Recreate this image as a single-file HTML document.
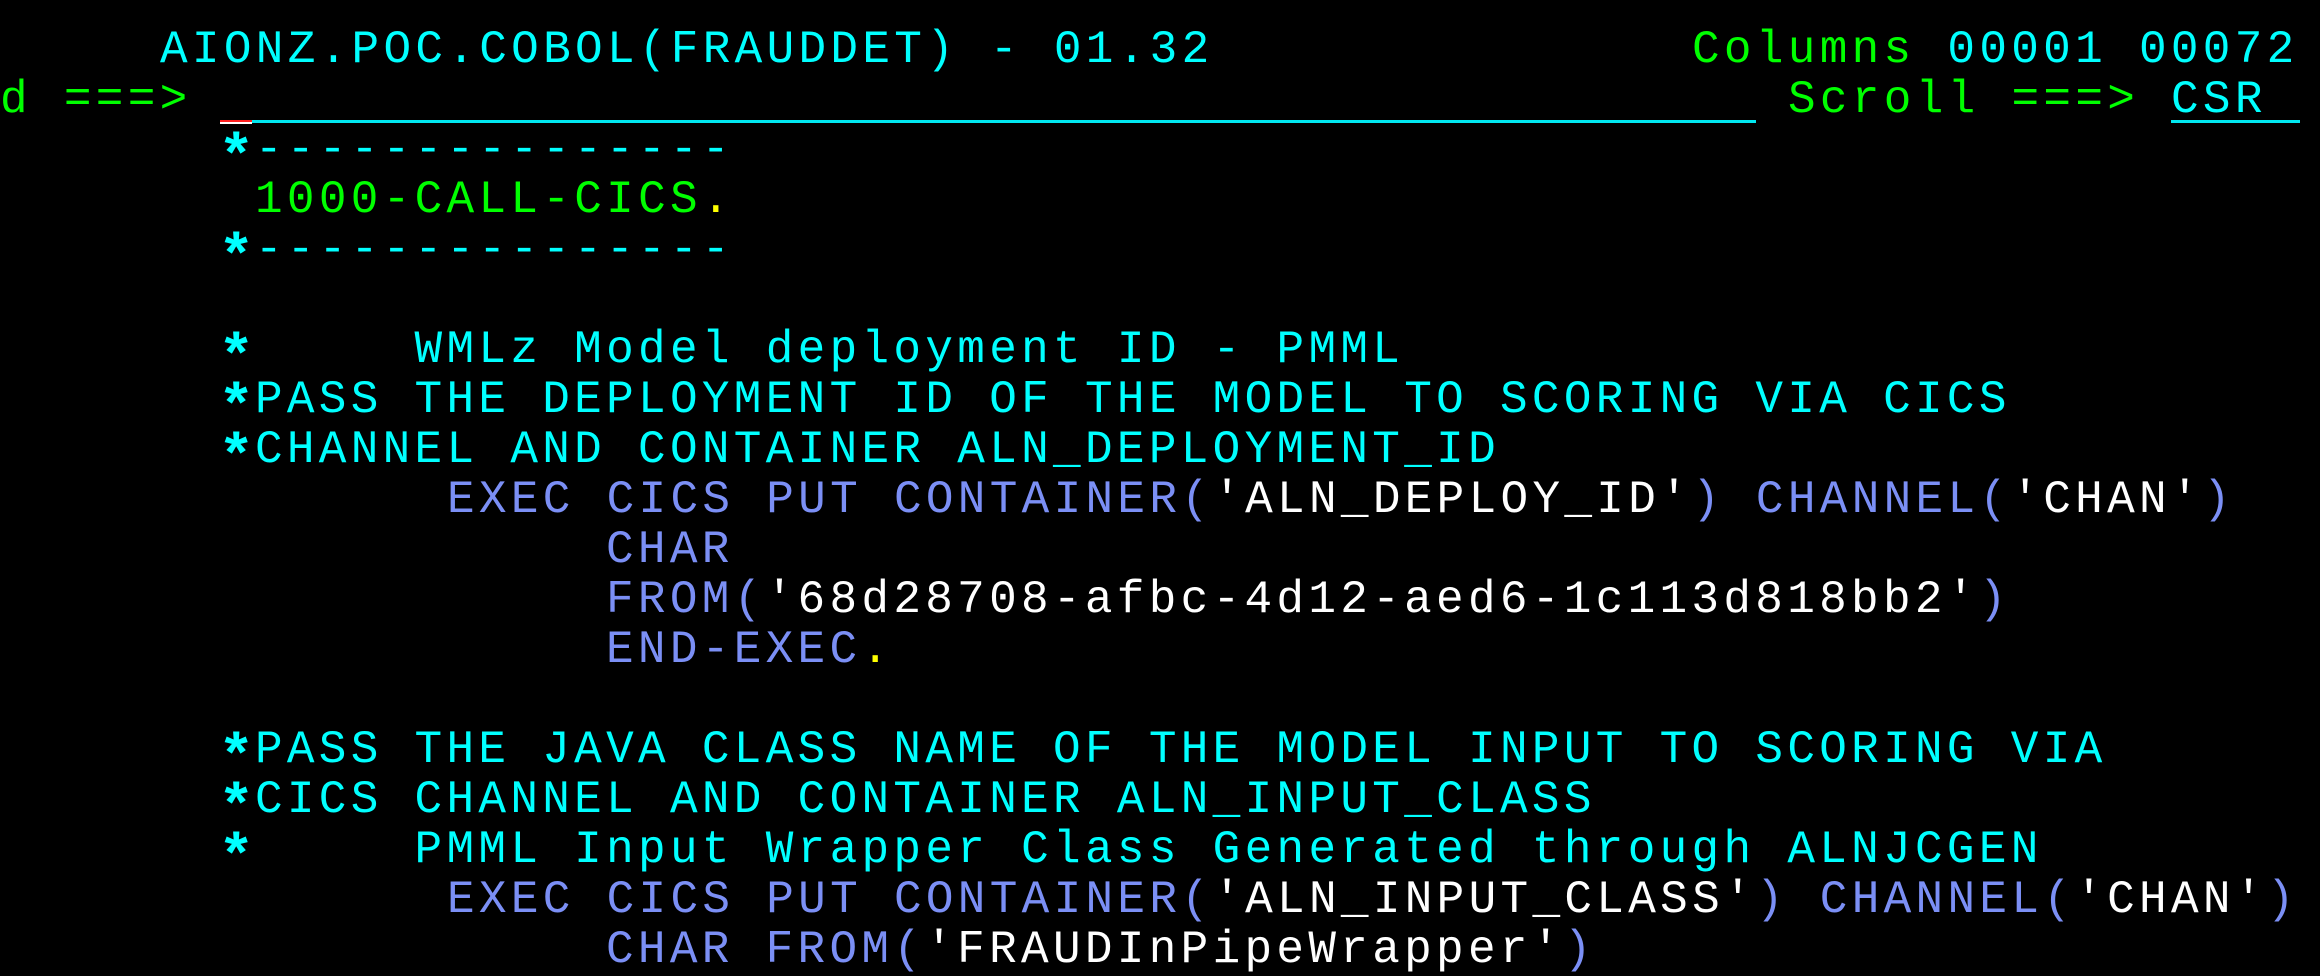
<!DOCTYPE html>
<html><head><meta charset="utf-8"><style>
html,body{margin:0;padding:0;background:#000;width:2320px;height:976px;overflow:hidden}
.r{position:absolute;height:50px;line-height:50px;white-space:pre;font-family:"Liberation Mono",monospace;font-size:46px;letter-spacing:4.32px;margin-top:3px}
.c{color:#00ffff}.g{color:#00ff00}.b{color:#7b8ff5}.w{color:#ffffff}.y{color:#ffff00}
.s{display:inline-block;transform:translateY(9px) scale(1.3);font-weight:bold}
.ul{position:absolute;height:3px;background:#00e8f0}
</style></head><body>
<div class="r c" style="top:22px;left:160px">AIONZ.POC.COBOL(FRAUDDET) - 01.32</div>
<div class="r" style="top:22px;left:1692px"><span class="g">Columns</span><span class="c"> 00001 00072</span></div>
<div class="r g" style="top:72px;left:0px">d ===&gt;</div>
<div class="r g" style="top:72px;left:1788px">Scroll ===&gt;</div>
<div class="r c" style="top:72px;left:2171px">CSR</div>
<div class="ul" style="top:120px;left:252px;width:1504px"></div>
<div style="position:absolute;top:120px;left:220px;width:32px;height:2px;background:#ff2020"></div>
<div style="position:absolute;top:122px;left:220px;width:32px;height:2px;background:#fff"></div>
<div class="ul" style="top:120px;left:2171px;width:129px"></div>
<div class="r c" style="top:122px;left:223px"><span class="s">*</span>---------------</div>
<div class="r" style="top:172px;left:255px"><span class="g">1000-CALL-CICS</span><span class="y">.</span></div>
<div class="r c" style="top:222px;left:223px"><span class="s">*</span>---------------</div>
<div class="r c" style="top:322px;left:223px"><span class="s">*</span>     WMLz Model deployment ID - PMML</div>
<div class="r c" style="top:372px;left:223px"><span class="s">*</span>PASS THE DEPLOYMENT ID OF THE MODEL TO SCORING VIA CICS</div>
<div class="r c" style="top:422px;left:223px"><span class="s">*</span>CHANNEL AND CONTAINER ALN_DEPLOYMENT_ID</div>
<div class="r" style="top:472px;left:447px"><span class="b">EXEC CICS PUT CONTAINER(</span><span class="w">'ALN_DEPLOY_ID'</span><span class="b">) CHANNEL(</span><span class="w">'CHAN'</span><span class="b">)</span></div>
<div class="r b" style="top:522px;left:606px">CHAR</div>
<div class="r" style="top:572px;left:606px"><span class="b">FROM(</span><span class="w">'68d28708-afbc-4d12-aed6-1c113d818bb2'</span><span class="b">)</span></div>
<div class="r" style="top:622px;left:606px"><span class="b">END-EXEC</span><span class="y">.</span></div>
<div class="r c" style="top:722px;left:223px"><span class="s">*</span>PASS THE JAVA CLASS NAME OF THE MODEL INPUT TO SCORING VIA</div>
<div class="r c" style="top:772px;left:223px"><span class="s">*</span>CICS CHANNEL AND CONTAINER ALN_INPUT_CLASS</div>
<div class="r c" style="top:822px;left:223px"><span class="s">*</span>     PMML Input Wrapper Class Generated through ALNJCGEN</div>
<div class="r" style="top:872px;left:447px"><span class="b">EXEC CICS PUT CONTAINER(</span><span class="w">'ALN_INPUT_CLASS'</span><span class="b">) CHANNEL(</span><span class="w">'CHAN'</span><span class="b">)</span></div>
<div class="r" style="top:922px;left:606px"><span class="b">CHAR FROM(</span><span class="w">'FRAUDInPipeWrapper'</span><span class="b">)</span></div>
</body></html>
